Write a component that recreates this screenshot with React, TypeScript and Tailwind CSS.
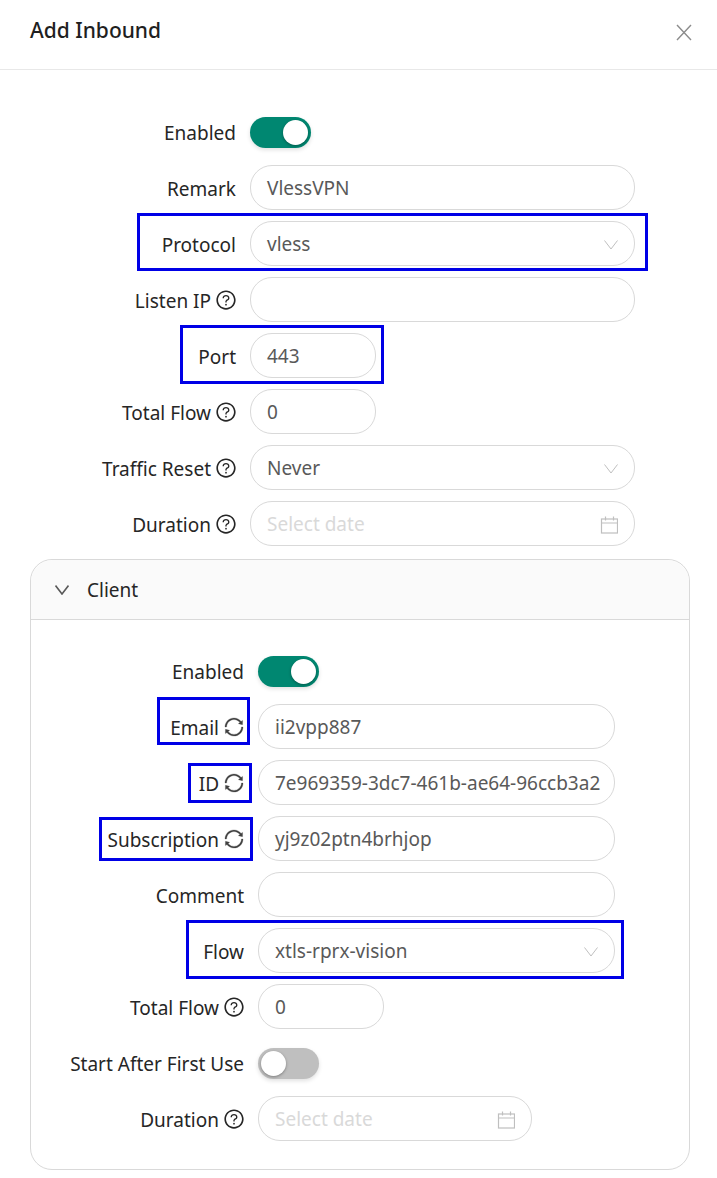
import { ReactNode } from 'react'
import { AiOutlineQuestionCircle, AiOutlineSync } from 'react-icons/ai'

function Help() {
  return <AiOutlineQuestionCircle size={22} className="-mr-[1px] ml-[1px] shrink-0 text-[#262626]" />
}

function Refresh() {
  return <AiOutlineSync size={22} stroke="currentColor" strokeWidth={12} className="-mr-[1px] ml-[1px] shrink-0 text-[#404040]" />
}

function ChevronIcon({ className, weight = 1 }: { className: string; weight?: number }) {
  return (
    <svg width="14" height="10" viewBox="0 0 14 10" fill="none" stroke="currentColor" strokeWidth={weight} className={className}>
      <path d="M0.5 0.5 L7 9 L13.5 0.5" />
    </svg>
  )
}

function CalendarIcon() {
  return (
    <svg width="18" height="18" viewBox="0 0 18 18" fill="none" stroke="#bfbfbf" strokeWidth="1.2" className="shrink-0">
      <rect x="1.5" y="3" width="16" height="14" />
      <path d="M1.5 7 H17.5 M5.5 0.5 V4.5 M13.5 0.5 V4.5" />
    </svg>
  )
}

function Toggle({ on }: { on?: boolean }) {
  return (
    <div className={`mt-[1px] flex h-[31px] w-[61px] items-center rounded-full px-[3px] shadow-[0_2px_4px_rgba(0,0,0,0.12)] ${on ? 'justify-end bg-[#008771]' : 'justify-start bg-[#bfbfbf]'}`}>
      <div className="h-[25px] w-[25px] rounded-full bg-white shadow-[0_1px_3px_rgba(0,0,0,0.35)]" />
    </div>
  )
}

function Field({ width, children }: { width: string; children: ReactNode }) {
  return (
    <div className={`mb-[1px] flex h-[45px] items-center justify-between rounded-[22px] border border-[#d9d9d9] bg-white pl-4 pr-4 pt-[2px] text-[#595959] ${width}`}>
      {children}
    </div>
  )
}

function Row({ label, labelWidth, icon, children }: { label: string; labelWidth: string; icon?: ReactNode; children: ReactNode }) {
  return (
    <div className="flex h-[56px] items-center gap-[14px]">
      <div className={`flex items-center justify-end gap-[3px] text-[#262626] ${labelWidth}`}>
        <span className="whitespace-nowrap pt-[2px]">{label}</span>
        {icon}
      </div>
      {children}
    </div>
  )
}

function Placeholder() {
  return <span className="text-[#d9d9d9]">Select date</span>
}

const boxes = [
  'left-[137px] top-[213px] h-[58px] w-[511px]',
  'left-[180px] top-[325px] h-[59px] w-[204px]',
  'left-[157px] top-[697px] h-[48px] w-[93px]',
  'left-[188px] top-[763px] h-[40px] w-[64px]',
  'left-[99px] top-[817px] h-[44px] w-[154px]',
  'left-[186px] top-[920px] h-[59px] w-[438px]',
]

export default function App() {
  const top = 'w-[206px]'
  const client = 'w-[213px]'
  const chevron = <ChevronIcon className="shrink-0 text-[#bfbfbf]" />

  return (
    <div className="relative h-[1178px] w-[717px] overflow-hidden bg-white font-['Noto_Sans',sans-serif] text-[19px]">
      <div className="flex h-[70px] items-center justify-between border-b border-[#e8e8e8] pl-[30px] pr-[25px]">
        <span className="mb-[7px] text-[21px] font-medium text-[#1f1f1f]">Add Inbound</span>
        <svg width="16" height="17" viewBox="0 0 16 17" fill="none" stroke="#8c8c8c" strokeWidth="1.4" className="mb-[5px]">
          <path d="M1 1 L15 16 M15 1 L1 16" />
        </svg>
      </div>

      <div className="pl-[30px] pr-[27px] pt-[34px]">
        <Row label="Enabled" labelWidth={top}><Toggle on /></Row>
        <Row label="Remark" labelWidth={top}><Field width="w-[385px]">VlessVPN</Field></Row>
        <Row label="Protocol" labelWidth={top}><Field width="w-[385px]">vless{chevron}</Field></Row>
        <Row label="Listen IP" labelWidth={top} icon={<Help />}><Field width="w-[385px]">{''}</Field></Row>
        <Row label="Port" labelWidth={top}><Field width="w-[126px]">443</Field></Row>
        <Row label="Total Flow" labelWidth={top} icon={<Help />}><Field width="w-[126px]">0</Field></Row>
        <Row label="Traffic Reset" labelWidth={top} icon={<Help />}><Field width="w-[385px]">Never{chevron}</Field></Row>
        <Row label="Duration" labelWidth={top} icon={<Help />}><Field width="w-[385px]"><Placeholder /><CalendarIcon /></Field></Row>

        <div className="mt-[7px] rounded-[22px] border border-[#d9d9d9]">
          <div className="flex h-[60px] items-center gap-[18px] rounded-t-[22px] border-b border-[#d9d9d9] bg-[#fafafa] pl-[24px] text-[#262626]">
            <ChevronIcon className="text-[#595959]" weight={1.6} />
            <span className="pt-[2px]">Client</span>
          </div>
          <div className="pb-[22px] pt-[23px]">
            <Row label="Enabled" labelWidth={client}><Toggle on /></Row>
            <Row label="Email" labelWidth={client} icon={<Refresh />}><Field width="w-[357px]">ii2vpp887</Field></Row>
            <Row label="ID" labelWidth={client} icon={<Refresh />}>
              <Field width="w-[357px]"><span className="whitespace-nowrap">7e969359-3dc7-461b-ae64-96ccb3a2</span></Field>
            </Row>
            <Row label="Subscription" labelWidth={client} icon={<Refresh />}><Field width="w-[357px]">yj9z02ptn4brhjop</Field></Row>
            <Row label="Comment" labelWidth={client}><Field width="w-[357px]">{''}</Field></Row>
            <Row label="Flow" labelWidth={client}><Field width="w-[357px]">xtls-rprx-vision{chevron}</Field></Row>
            <Row label="Total Flow" labelWidth={client} icon={<Help />}><Field width="w-[126px]">0</Field></Row>
            <Row label="Start After First Use" labelWidth={client}><Toggle /></Row>
            <Row label="Duration" labelWidth={client} icon={<Help />}><Field width="w-[274px]"><Placeholder /><CalendarIcon /></Field></Row>
          </div>
        </div>
      </div>

      {boxes.map((box) => (
        <div key={box} className={`pointer-events-none absolute border-[3px] border-[#0000e6] ${box}`} />
      ))}
    </div>
  )
}
